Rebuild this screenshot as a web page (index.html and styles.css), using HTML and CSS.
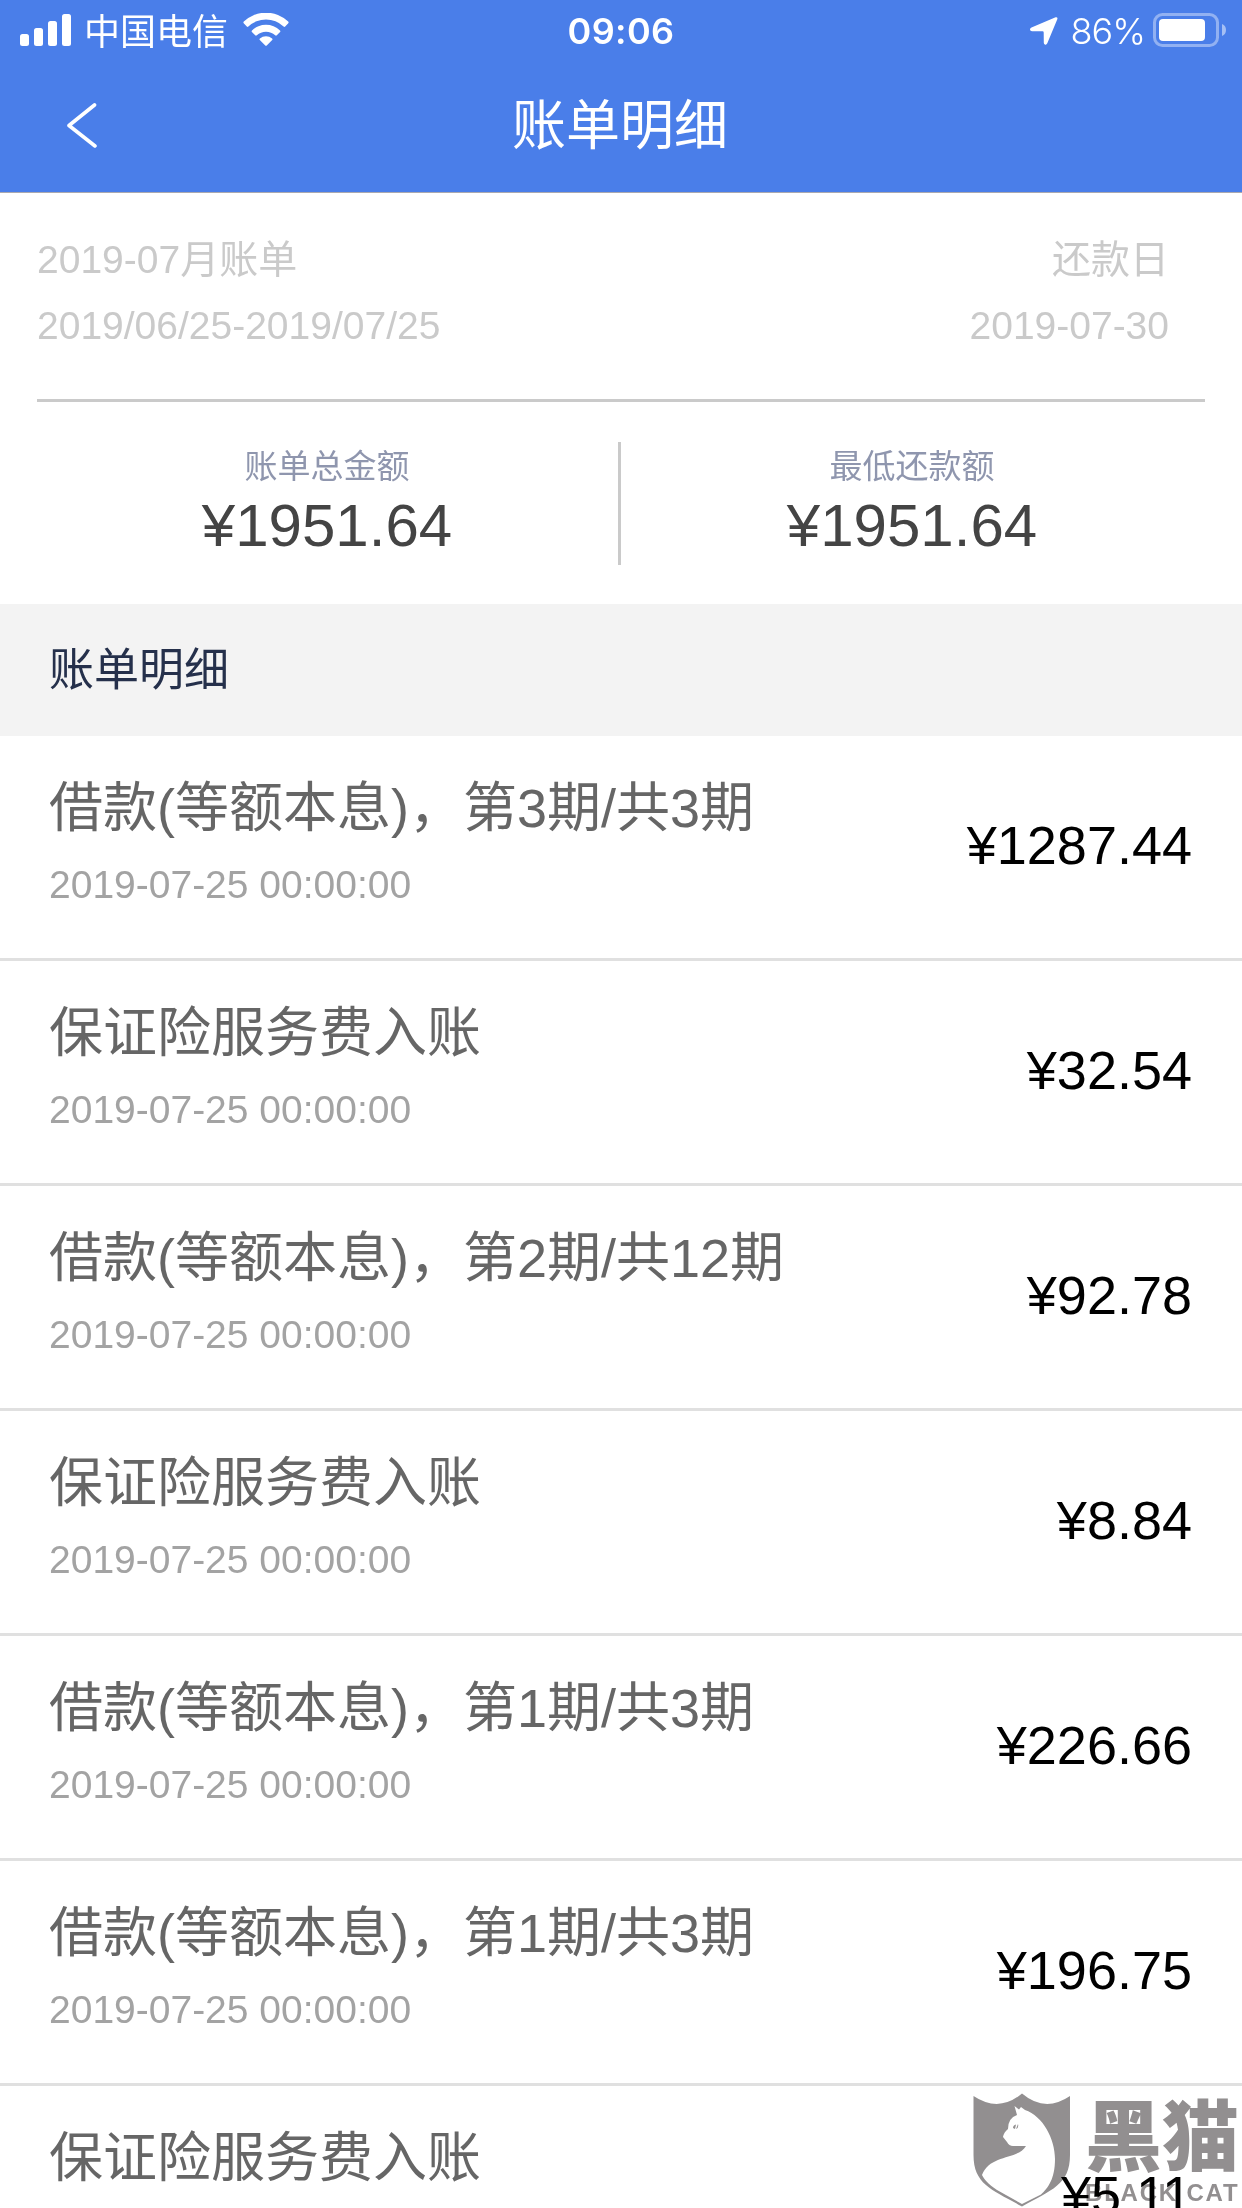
FILE: index.html
```html
<!DOCTYPE html>
<html lang="zh-CN">
<head>
    <meta charset="UTF-8">
    <meta name="viewport" content="width=device-width, initial-scale=1.0">
    <link rel="stylesheet" href="styles.css">
    <title>账单明细</title>
</head>
<body>

    <header>
        <div class="status-bar">
            <div class="status-left">
                <svg class="signal" width="51" height="32" viewBox="0 0 51 32" fill="#fff">
                    <rect x="0" y="20" width="9" height="12" rx="2.5"/>
                    <rect x="14" y="14" width="9" height="18" rx="2.5"/>
                    <rect x="28" y="7" width="9" height="25" rx="2.5"/>
                    <rect x="42" y="0" width="9" height="32" rx="2.5"/>
                </svg>
                <span class="carrier">中国电信</span>
                <svg class="wifi" width="46" height="33" viewBox="0 0 46 33" fill="#fff">
                    <path d="M0.7 10.2Q0 9.4 0.8 8.6A32 32 0 0 1 45.2 8.6Q46 9.4 45.3 10.2L42.2 13.5Q41.4 14.3 40.6 13.5A25.5 25.5 0 0 0 5.4 13.5Q4.6 14.3 3.8 13.5Z"/>
                    <path d="M8.9 18.9Q8.2 18.1 9 17.4A20.5 20.5 0 0 1 37 17.4Q37.8 18.1 37.1 18.9L33.8 22.3Q33 23 32.2 22.3A13.5 13.5 0 0 0 13.8 22.3Q13 23 12.2 22.3Z"/>
                    <path d="M16.8 27Q16 26.3 16.9 25.5A9.3 9.3 0 0 1 29.1 25.5Q30 26.3 29.2 27L24 32.3Q23 33.3 22 32.3Z"/>
                </svg>
            </div>
            <span class="time">09:06</span>
            <div class="status-right">
                <svg class="location" width="28" height="28" viewBox="0 0 28 28" fill="#fff">
                    <path d="M25.6 0.2Q28 -0.2 27.3 2.3L17.3 26.3Q16.4 28.2 14.8 27.5Q13.8 27 13.8 25.7L13.7 15.4Q13.7 14.3 12.6 14.3L2 14.2Q0.2 14.1 0 12.7Q-0.1 11.3 1.5 10.6Z"/>
                </svg>
                <span class="percent">86%</span>
                <svg class="battery" width="74" height="34" viewBox="0 0 74 34">
                    <rect x="1.5" y="1.5" width="63" height="31" rx="8" fill="none" stroke="#fff" stroke-opacity="0.4" stroke-width="3"/>
                    <rect x="6" y="6" width="46" height="22" rx="4" fill="#fff"/>
                    <path d="M69 11Q73 12.5 73 17Q73 21.5 69 23Z" fill="#fff" fill-opacity="0.5"/>
                </svg>
            </div>
        </div>
        <div class="nav-bar">
            <svg class="back" width="30" height="45" viewBox="0 0 30 45">
                <path d="M27.5 2L2 22.5L28 43" fill="none" stroke="#fff" stroke-width="3.6" stroke-linecap="round" stroke-linejoin="round"/>
            </svg>
            <h1>账单明细</h1>
        </div>
    </header>

    <main>
        <div class="bill-info">
            <div>
                <p>2019-07月账单</p>
                <p>2019/06/25-2019/07/25</p>
            </div>
            <div class="due">
                <p>还款日</p>
                <p>2019-07-30</p>
            </div>
        </div>

        <div class="totals">
            <div class="total">
                <p class="label">账单总金额</p>
                <p class="sum">¥1951.64</p>
            </div>
            <div class="total">
                <p class="label">最低还款额</p>
                <p class="sum">¥1951.64</p>
            </div>
        </div>

        <h2>账单明细</h2>

        <ul class="list">
            <li>
                <div>
                    <p class="name">借款(等额本息)，第3期/共3期</p>
                    <p class="date">2019-07-25 00:00:00</p>
                </div>
                <span class="amount">¥1287.44</span>
            </li>
            <li>
                <div>
                    <p class="name">保证险服务费入账</p>
                    <p class="date">2019-07-25 00:00:00</p>
                </div>
                <span class="amount">¥32.54</span>
            </li>
            <li>
                <div>
                    <p class="name">借款(等额本息)，第2期/共12期</p>
                    <p class="date">2019-07-25 00:00:00</p>
                </div>
                <span class="amount">¥92.78</span>
            </li>
            <li>
                <div>
                    <p class="name">保证险服务费入账</p>
                    <p class="date">2019-07-25 00:00:00</p>
                </div>
                <span class="amount">¥8.84</span>
            </li>
            <li>
                <div>
                    <p class="name">借款(等额本息)，第1期/共3期</p>
                    <p class="date">2019-07-25 00:00:00</p>
                </div>
                <span class="amount">¥226.66</span>
            </li>
            <li>
                <div>
                    <p class="name">借款(等额本息)，第1期/共3期</p>
                    <p class="date">2019-07-25 00:00:00</p>
                </div>
                <span class="amount">¥196.75</span>
            </li>
            <li>
                <div>
                    <p class="name">保证险服务费入账</p>
                </div>
                <span class="amount">¥5.11</span>
            </li>
        </ul>
    </main>

    <div class="watermark">
        <svg width="98" height="115" viewBox="0 0 98 115">
            <path d="M0.5 3Q26 20 49 0.5Q72 20 97 3V62C97 92 78 97 49 113.5C20 97 0.5 92 0.5 62Z" fill="#928f90"/>
            <path d="M41.5 13L46 16.5L48 14L52 17C70 23 82 46 82 66C82 86 75 95 68 101.5L49 111L24 97C15 91 11 86 9 82C17 61 45 67 53 53H40Q36 53 34 49L30 44Q31 39 35 36Q35 25 44 22Z" fill="#fff"/>
            <path d="M40 35Q40 32 43 31.5L42 36ZM43 36Q46 35 45 31Z" fill="#928f90"/>
        </svg>
        <div class="brand">
            <span class="brand-cn">黑猫</span>
            <span class="brand-en">BLACK CAT</span>
        </div>
    </div>

</body>
</html>
```
FILE: styles.css
```css
body {
    background-color: #fff;
    margin: 0;
    height: 2208px;
    overflow: hidden;
    position: relative;
    font-family: "Liberation Sans", "Noto Sans CJK SC", sans-serif;
}

p, h1, h2, ul {
    margin: 0;
    padding: 0;
    font-weight: 400;
}

header {
    height: 192px;
    background-color: #4a7ee9;
    border-bottom: 1px solid #aaa9af;
    color: #fff;
}

.status-bar {
    display: grid;
    grid-template-columns: 1fr auto 1fr;
    height: 60px;
    font-family: Inter, "Noto Sans CJK SC", sans-serif;
    font-size: 36px;
    line-height: 60px;
}

.status-left {
    display: flex;
    padding-left: 20px;
}

.signal {
    margin-top: 14px;
}

.carrier {
    margin-left: 13px;
    padding-top: 2px;
}

.wifi {
    margin: 13px 0 0 15px;
}

.time {
    padding-top: 1px;
    font-weight: 600;
    letter-spacing: 0.4px;
}

.status-right {
    display: flex;
    justify-content: flex-end;
    padding-right: 15px;
}

.location {
    margin: 17px 13px 0 0;
}

.percent {
    padding-top: 1px;
    font-weight: 350;
    letter-spacing: -1px;
}

.battery {
    margin: 13px 0 0 8px;
}

.nav-bar {
    display: grid;
    grid-template-columns: 1fr auto 1fr;
    height: 132px;
}

.back {
    margin: 43px 0 0 67px;
}

h1 {
    padding-right: 2px;
    font-size: 54px;
    line-height: 132px;
}

.bill-info {
    display: flex;
    justify-content: space-between;
    height: 172px;
    margin: 0 37px;
    padding-top: 34px;
    border-bottom: 3px solid #cacaca;
    font-size: 39px;
    line-height: 66px;
    color: #cacaca;
}

.due {
    padding-right: 36px;
    text-align: right;
}

.totals {
    display: grid;
    grid-template-columns: 584px 1fr;
    height: 123px;
    margin: 40px 39px 39px 37px;
}

.total {
    text-align: center;
}

.total:first-child {
    box-sizing: border-box;
    border-right: 3px solid #cacaca;
    padding-right: 1px;
}

.label {
    padding-top: 2px;
    font-size: 33px;
    line-height: 46px;
    color: #8f96ae;
}

.sum {
    margin-top: 2px;
    font-size: 60px;
    line-height: 68px;
    color: #444;
}

h2 {
    height: 132px;
    padding-left: 49px;
    background-color: #f3f3f3;
    font-size: 45px;
    line-height: 134px;
    color: #25304b;
}

.list {
    list-style: none;
}

.list li {
    display: flex;
    justify-content: space-between;
    box-sizing: border-box;
    height: 225px;
    padding: 34px 50px 0 49px;
    border-bottom: 3px solid #e0e0e0;
}

.name {
    font-size: 54px;
    line-height: 76px;
    color: #666;
}

.date {
    margin-top: 12px;
    font-size: 39px;
    line-height: 54px;
    color: #a3a3a3;
}

.amount {
    font-size: 54px;
    line-height: 151px;
    color: #000;
}

/* logo sur la dernière ligne */
.watermark {
    position: absolute;
    left: 973px;
    top: 2093px;
    display: flex;
    mix-blend-mode: multiply;
    color: #928f90;
}

.brand {
    display: flex;
    flex-direction: column;
    margin-left: 14px;
}

.brand-cn {
    padding-top: 2px;
    font-size: 77px;
    font-weight: 900;
    line-height: 86px;
    white-space: nowrap;
}

.brand-en {
    font-size: 24px;
    font-weight: 700;
    line-height: 24px;
    letter-spacing: 1.8px;
    white-space: nowrap;
}
```
